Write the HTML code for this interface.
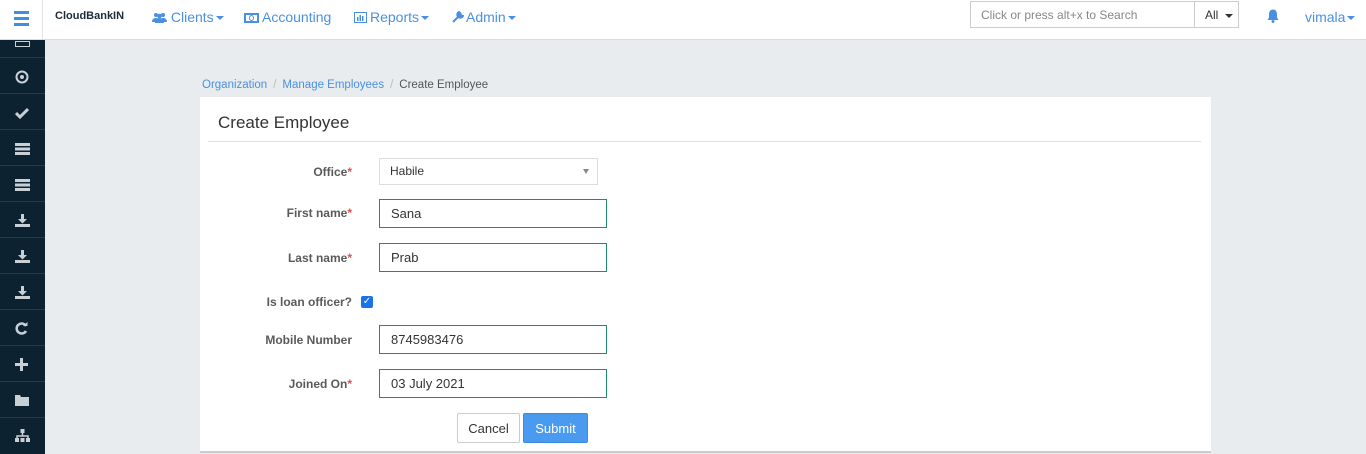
<!DOCTYPE html>
<html><head><style>
*{box-sizing:border-box;margin:0;padding:0}
body{width:1366px;height:454px;overflow:hidden;background:#e9ecef;font-family:"Liberation Sans",sans-serif;font-size:13px;color:#333;position:relative}
.top{position:absolute;left:0;top:0;width:1366px;height:40px;background:#fff;border-bottom:1px solid #dcdcdc}
.burger{position:absolute;left:0;top:0;width:43px;height:39px;border-right:1px solid #e3e3e3}
.burger i{position:absolute;left:14px;width:15px;height:3px;background:#3e8ee6}
.brand{position:absolute;left:55px;top:10px;font-weight:bold;font-size:11px;color:#1d2b3a}
.nav{position:absolute;top:9px;color:#4a90e2;font-size:14px;white-space:nowrap}
.caret{display:inline-block;border-left:4px solid transparent;border-right:4px solid transparent;border-top:4px solid currentColor;vertical-align:middle;margin-left:2px}
.search{position:absolute;left:970px;top:1px;width:225px;height:27px;border:1px solid #ccc;color:#888;font-size:12px;padding:6px 10px}
.all{position:absolute;left:1194px;top:1px;width:45px;height:27px;border:1px solid #ccc;font-size:12px;padding:6px 10px;color:#333;white-space:nowrap}
.side{position:absolute;left:0;top:40px;width:45px;height:414px;background:#0c2231}
.side div{position:absolute;left:0;width:45px;height:1px;background:#27394a}
.side svg{position:absolute;left:15px}
.bc{position:absolute;left:202px;top:79px;font-size:11.5px;color:#4a90e2}
.bc .s{color:#bbb;margin:0 6px}
.card{position:absolute;left:200px;top:97px;width:1011px;height:356px;background:#fff;border-bottom:2px solid #ccc}
.card h2{position:absolute;left:18px;top:16px;font-weight:normal;font-size:17px;color:#333}
.hr{position:absolute;left:8px;top:44px;width:993px;height:1px;background:#e0e0e0}
.lab{position:absolute;right:859px;font-weight:bold;font-size:12px;color:#5a5a5a;text-align:right}
.lab b{color:#d9534f}
.inp{position:absolute;left:179px;width:228px;height:29px;border:1px solid #1f8b6f;padding:6px 11px;font-size:13px;color:#333}
.btn{position:absolute;top:316px;height:30px;font-size:13px;padding:7px 0;text-align:center;border-radius:2px}
</style></head><body>
<div class="top">
 <div class="burger"><i style="top:11px"></i><i style="top:17px"></i><i style="top:23px"></i></div>
 <div class="brand">CloudBankIN</div>
 <div class="nav" style="left:152px"><svg width="15" height="11" viewBox="0 0 15 11" style="vertical-align:-1px"><circle cx="4" cy="3" r="2" fill="#4a90e2"/><circle cx="11" cy="3" r="2" fill="#4a90e2"/><circle cx="7.5" cy="4" r="2.3" fill="#4a90e2"/><path d="M0 10c0-3 2-4 4-4s4 1 4 4zM7 10c0-3 2-4 4-4s4 1 4 4zM3 11c0-3 2-5 4.5-5s4.5 2 4.5 5z" fill="#4a90e2"/></svg> Clients<span class="caret"></span></div>
 <div class="nav" style="left:244px"><span style="display:inline-block;width:15px;height:10px;border:2px solid #4a90e2;vertical-align:middle;margin-right:3px;position:relative"><span style="position:absolute;left:3px;top:0;width:5px;height:6px;border-radius:50%;border:1.5px solid #4a90e2"></span></span>Accounting</div>
 <div class="nav" style="left:354px"><svg width="13" height="11" viewBox="0 0 13 11" style="vertical-align:-1px;margin-right:3px"><rect x="0.5" y="0.5" width="12" height="10" fill="none" stroke="#4a90e2"/><rect x="3" y="5" width="1.5" height="4" fill="#4a90e2"/><rect x="5.5" y="3" width="1.5" height="6" fill="#4a90e2"/><rect x="8" y="4" width="1.5" height="5" fill="#4a90e2"/></svg>Reports<span class="caret"></span></div>
 <div class="nav" style="left:452px"><svg width="12" height="12" viewBox="0 0 12 12" style="vertical-align:-1px;margin-right:2px"><path d="M1 11L6 6M7 1a3 3 0 1 0 4 4l-2-.5-.5-2z" stroke="#4a90e2" stroke-width="2" fill="#4a90e2"/></svg>Admin<span class="caret"></span></div>
 <div class="search">Click or press alt+x to Search</div>
 <div class="all">All <span class="caret" style="margin-left:3px;color:#333"></span></div>
 <svg style="position:absolute;left:1267px;top:9px" width="12" height="14" viewBox="0 0 12 14"><path d="M6 0.5c-3 0-4 2.5-4 5v3L0.5 11h11L10 8.5v-3c0-2.5-1-5-4-5z" fill="#4a90e2"/><circle cx="6" cy="12.5" r="1.5" fill="#4a90e2"/></svg>
 <div class="nav" style="left:1305px">vimala<span class="caret"></span></div>
</div>
<div class="side">
 <svg style="top:1px" width="15" height="6"><rect width="15" height="6" fill="none" stroke="#c8d0d6" stroke-width="2"/></svg>
 <div style="top:17px"></div><svg style="top:30px" width="14" height="14" viewBox="0 0 14 14"><circle cx="7" cy="7" r="5.5" fill="none" stroke="#c8d0d6" stroke-width="2"/><circle cx="7" cy="7" r="2" fill="#c8d0d6"/></svg>
 <div style="top:53px"></div><svg style="top:67px" width="14" height="12" viewBox="0 0 14 12"><path d="M1 6l4 4 8-8" fill="none" stroke="#c8d0d6" stroke-width="3"/></svg>
 <div style="top:89px"></div><svg style="top:103px" width="15" height="12"><rect y="0" width="15" height="3" fill="#c8d0d6"/><rect y="4.5" width="15" height="3" fill="#c8d0d6"/><rect y="9" width="15" height="3" fill="#c8d0d6"/></svg>
 <div style="top:125px"></div><svg style="top:139px" width="15" height="12"><rect y="0" width="15" height="3" fill="#c8d0d6"/><rect y="4.5" width="15" height="3" fill="#c8d0d6"/><rect y="9" width="15" height="3" fill="#c8d0d6"/></svg>
 <div style="top:161px"></div><svg style="top:174px" width="15" height="13" viewBox="0 0 15 13"><path d="M6 0h3v5h3l-4.5 4.5L3 5h3z" fill="#c8d0d6"/><rect y="10" width="15" height="3" fill="#c8d0d6"/></svg>
 <div style="top:197px"></div><svg style="top:210px" width="15" height="13" viewBox="0 0 15 13"><path d="M6 0h3v5h3l-4.5 4.5L3 5h3z" fill="#c8d0d6"/><rect y="10" width="15" height="3" fill="#c8d0d6"/></svg>
 <div style="top:233px"></div><svg style="top:246px" width="15" height="13" viewBox="0 0 15 13"><path d="M6 0h3v5h3l-4.5 4.5L3 5h3z" fill="#c8d0d6"/><rect y="10" width="15" height="3" fill="#c8d0d6"/></svg>
 <div style="top:269px"></div><svg style="top:282px" width="13" height="13" viewBox="0 0 13 13"><path d="M11 4A5 5 0 1 0 11 9" fill="none" stroke="#c8d0d6" stroke-width="2.5"/><path d="M8 4h4.5V0z" fill="#c8d0d6"/></svg>
 <div style="top:305px"></div><svg style="top:318px" width="13" height="13"><rect x="5" width="3" height="13" fill="#c8d0d6"/><rect y="5" width="13" height="3" fill="#c8d0d6"/></svg>
 <div style="top:341px"></div><svg style="top:355px" width="14" height="11"><path d="M0 0h5l1 2h8v9H0z" fill="#c8d0d6"/></svg>
 <div style="top:377px"></div><svg style="top:389px" width="15" height="13" viewBox="0 0 15 13"><rect x="5.5" y="0" width="4" height="4" fill="#c8d0d6"/><path d="M7.5 4v3M2 9V7h11v2" stroke="#c8d0d6" fill="none" stroke-width="1.5"/><rect x="0" y="9" width="4" height="4" fill="#c8d0d6"/><rect x="5.5" y="9" width="4" height="4" fill="#c8d0d6"/><rect x="11" y="9" width="4" height="4" fill="#c8d0d6"/></svg>
</div>
<div class="bc">Organization<span class="s">/</span>Manage Employees<span class="s">/</span><span style="color:#555">Create Employee</span></div>
<div class="card">
 <h2>Create Employee</h2><div class="hr"></div>
 <div class="lab" style="top:68px">Office<b>*</b></div>
 <div class="inp" style="top:61px;width:219px;height:27px;border-color:#ddd;padding:5px 10px;font-size:12px">Habile<span style="position:absolute;right:8px;top:10px;border-left:3px solid transparent;border-right:3px solid transparent;border-top:5px solid #888"></span></div>
 <div class="lab" style="top:109px">First name<b>*</b></div>
 <div class="inp" style="top:102px">Sana</div>
 <div class="lab" style="top:154px">Last name<b>*</b></div>
 <div class="inp" style="top:146px">Prab</div>
 <div class="lab" style="top:198px;right:859px">Is loan officer?</div>
 <div style="position:absolute;left:161px;top:199px;width:12px;height:12px;background:#1a73e8;border-radius:2px;color:#fff;font-size:10px;line-height:12px;text-align:center">✓</div>
 <div class="lab" style="top:236px">Mobile Number</div>
 <div class="inp" style="top:228px">8745983476</div>
 <div class="lab" style="top:280px">Joined On<b>*</b></div>
 <div class="inp" style="top:272px">03 July 2021</div>
 <div class="btn" style="left:257px;width:63px;border:1px solid #ccc;color:#333">Cancel</div>
 <div class="btn" style="left:323px;width:65px;background:#4a9af0;border:1px solid #3b8ae0;color:#fff">Submit</div>
</div>
</body></html>
